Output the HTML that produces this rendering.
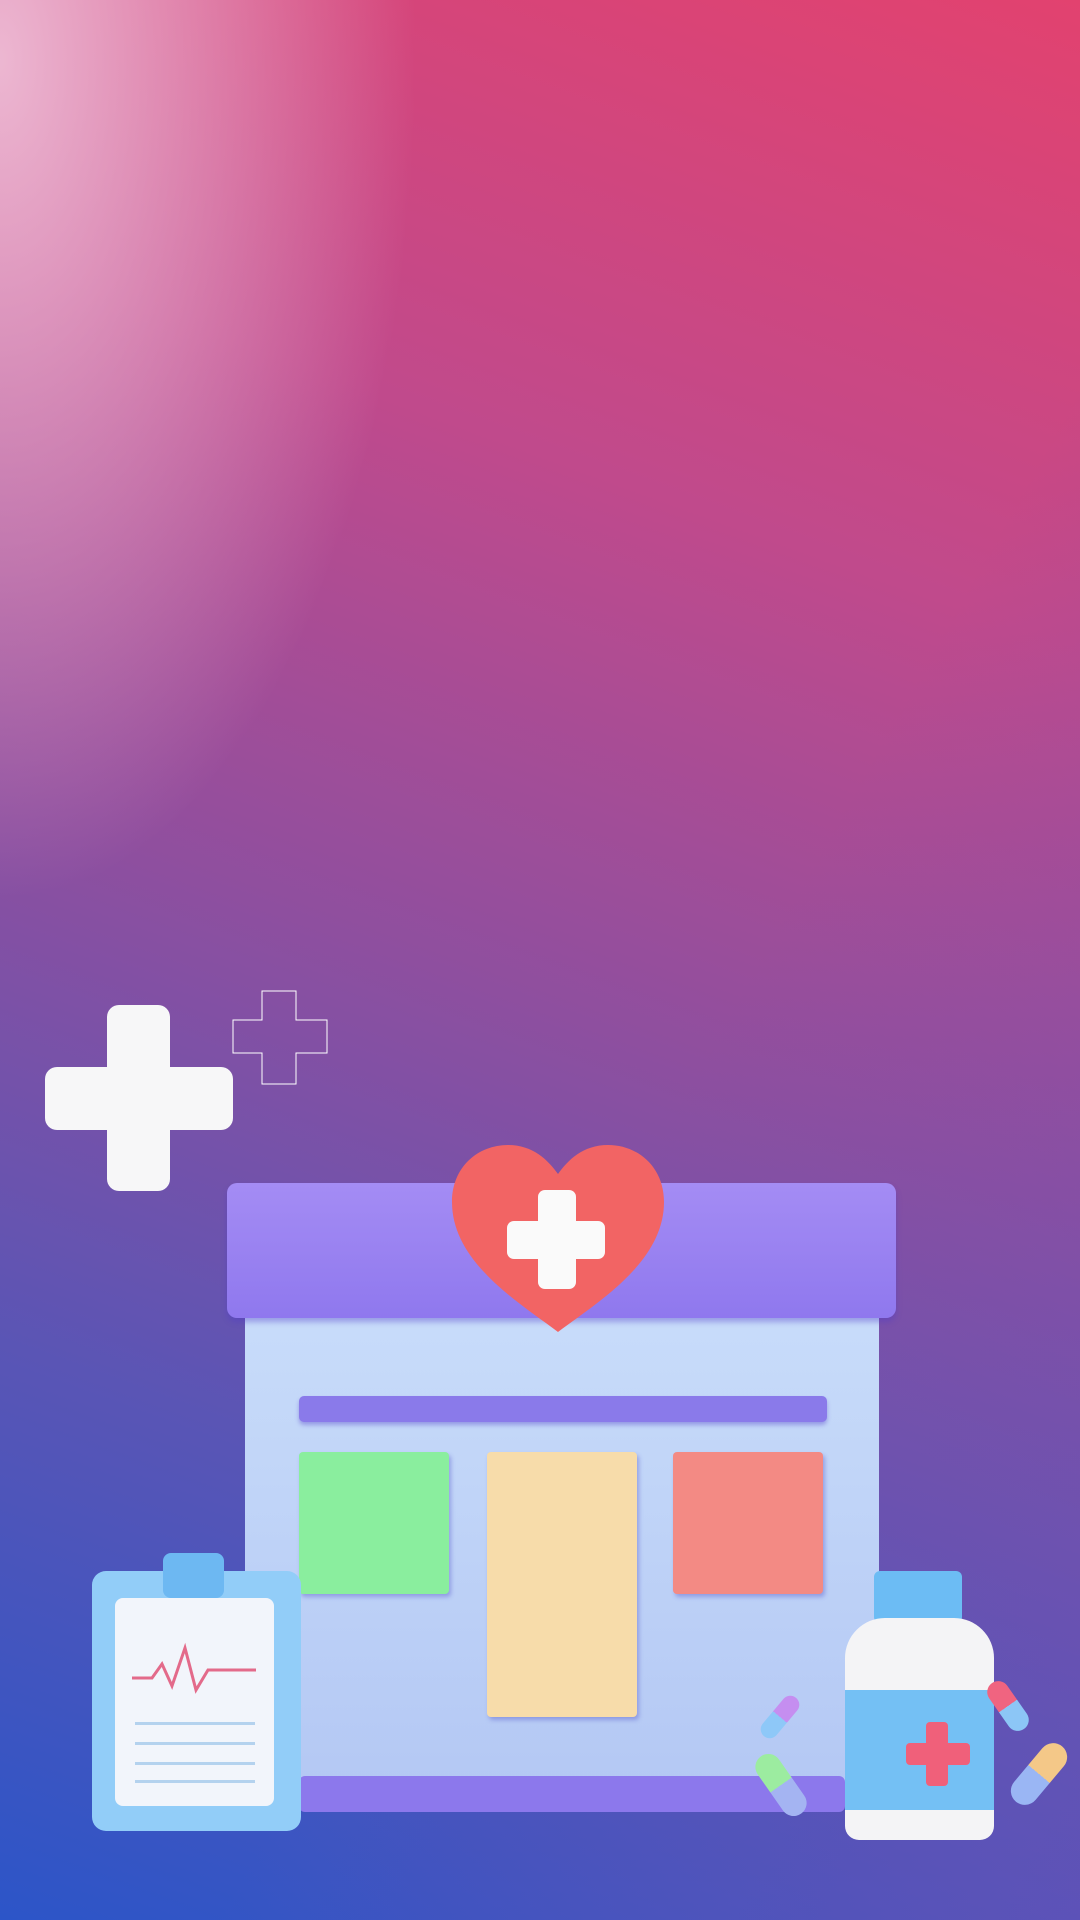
<!DOCTYPE html>
<html><head><meta charset="utf-8"><style>
html,body{margin:0;padding:0}
body{width:1080px;height:1920px;position:relative;overflow:hidden;
background:linear-gradient(200deg,#e2426f 0%,#c04a8c 28%,#8e4f9f 52%,#5a55b5 75%,#2c55c8 100%);}
.ov{position:absolute;inset:0;background:radial-gradient(ellipse 520px 1050px at 0px 60px,rgba(240,195,218,0.9),rgba(240,190,215,0.35) 50%,rgba(240,190,215,0) 80%);}
.ov2{position:absolute;inset:0;background:linear-gradient(to top left,rgba(110,80,180,0.5),rgba(110,80,180,0) 40%);}
.a{position:absolute}
</style></head><body>
<div class="ov"></div><div class="ov2"></div>
<div class="a" style="left:107px;top:1005px;width:63px;height:186px;background:#f7f7f8;border-radius:12px"></div>
<div class="a" style="left:45px;top:1067px;width:188px;height:63px;background:#f7f7f8;border-radius:12px"></div>
<svg class="a" style="left:232px;top:990px" width="97" height="96" viewBox="0 0 97 96"><path d="M30 1H64V30H95V63H64V94H30V63H1V30H30Z" fill="none" stroke="#fff" stroke-width="1"/></svg>
<div class="a" style="left:245px;top:1310px;width:634px;height:478px;background:linear-gradient(#c8dcfa,#b4c8f4);border-radius:8px"></div>
<div class="a" style="left:299px;top:1396px;width:528px;height:26px;background:#8a7aea;border-radius:5px;box-shadow:0 3px 4px rgba(80,60,200,.4)"></div>
<div class="a" style="left:299px;top:1452px;width:150px;height:142px;background:#8aee9e;border-radius:4px;box-shadow:2px 3px 4px rgba(80,80,200,.4)"></div>
<div class="a" style="left:487px;top:1452px;width:150px;height:265px;background:#f7dcaa;border-radius:4px;box-shadow:2px 3px 4px rgba(80,80,200,.4)"></div>
<div class="a" style="left:673px;top:1452px;width:150px;height:142px;background:#f38a84;border-radius:4px;box-shadow:2px 3px 4px rgba(80,80,200,.4)"></div>
<div class="a" style="left:299px;top:1776px;width:546px;height:36px;background:#8c78ec;border-radius:6px"></div>
<div class="a" style="left:227px;top:1183px;width:669px;height:135px;background:linear-gradient(#a48cf4,#8f78ee);border-radius:10px;box-shadow:0 4px 6px rgba(80,60,200,.4)"></div>
<svg class="a" style="left:448px;top:1142px" width="220" height="194" viewBox="0 0 220 194"><path d="M110 190C70 160 4 120 4 60C4 25 30 3 60 3C85 3 100 18 110 32C120 18 135 3 160 3C190 3 216 25 216 60C216 120 150 160 110 190Z" fill="#f26464"/></svg>
<div class="a" style="left:538px;top:1190px;width:38px;height:99px;background:#fafafa;border-radius:7px"></div>
<div class="a" style="left:507px;top:1221px;width:98px;height:38px;background:#fafafa;border-radius:7px"></div>
<div class="a" style="left:92px;top:1571px;width:209px;height:260px;background:#92cdf8;border-radius:14px"></div>
<div class="a" style="left:115px;top:1598px;width:159px;height:208px;background:#f2f5fb;border-radius:8px"></div>
<div class="a" style="left:163px;top:1553px;width:61px;height:45px;background:#6db8f2;border-radius:8px"></div>
<svg class="a" style="left:130px;top:1640px" width="130" height="60" viewBox="0 0 130 60"><path d="M2 38H22L32 24L42 46L55 8L66 50L78 30H126" fill="none" stroke="#e36a8a" stroke-width="3"/></svg>
<div class="a" style="left:135px;top:1722px;width:120px;height:3px;background:#b4d2ee"></div>
<div class="a" style="left:135px;top:1742px;width:120px;height:3px;background:#b4d2ee"></div>
<div class="a" style="left:135px;top:1762px;width:120px;height:3px;background:#b4d2ee"></div>
<div class="a" style="left:135px;top:1780px;width:120px;height:3px;background:#b4d2ee"></div>
<div class="a" style="left:874px;top:1571px;width:88px;height:52px;background:#6cbcf4;border-radius:6px"></div>
<div class="a" style="left:845px;top:1618px;width:149px;height:222px;background:#f4f4f6;border-radius:40px 40px 14px 14px"></div>
<div class="a" style="left:845px;top:1690px;width:149px;height:120px;background:#74c0f4"></div>
<div class="a" style="left:926px;top:1722px;width:22px;height:64px;background:#f0607a;border-radius:4px"></div>
<div class="a" style="left:906px;top:1743px;width:64px;height:22px;background:#f0607a;border-radius:4px"></div>
<div class="a" style="left:771px;top:1692px;width:18px;height:50px;background:linear-gradient(#c58ef0 50%,#8ec8f8 50%);border-radius:9px;transform:rotate(40deg)"></div>
<div class="a" style="left:768px;top:1750px;width:26px;height:70px;background:linear-gradient(#9ceca0 50%,#a4b4f2 50%);border-radius:13px;transform:rotate(-35deg)"></div>
<div class="a" style="left:997px;top:1678px;width:22px;height:56px;background:linear-gradient(#f06480 50%,#8cc6f6 50%);border-radius:11px;transform:rotate(-35deg)"></div>
<div class="a" style="left:1025px;top:1738px;width:28px;height:72px;background:linear-gradient(#f4c888 50%,#9ab6f4 50%);border-radius:14px;transform:rotate(40deg)"></div>
</body></html>
